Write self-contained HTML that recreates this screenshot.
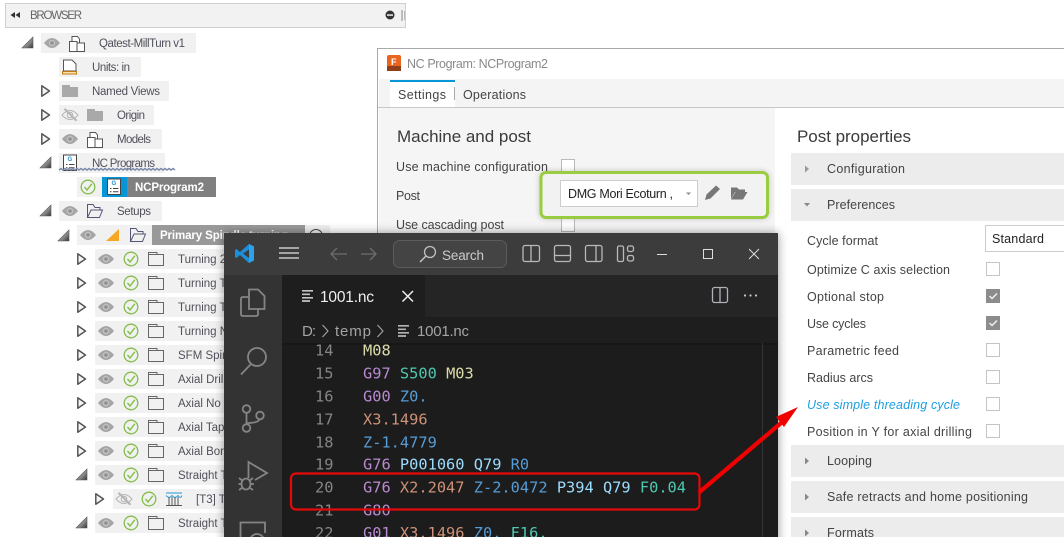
<!DOCTYPE html>
<html><head><meta charset="utf-8"><style>
html,body{margin:0;padding:0;background:#fff;width:1064px;height:537px;overflow:hidden}
svg{display:block}
text{font-family:"Liberation Sans",sans-serif;white-space:pre}
.t{font-size:11.5px;fill:#50505c}
.p{font-size:12.5px;fill:#444}
.h{font-size:17px;fill:#3a3a3a}
.m{font-family:"DejaVu Sans Mono","Liberation Mono",monospace;font-size:15.33px}
.n{fill:#858585}
</style></head><body>
<svg xmlns="http://www.w3.org/2000/svg" width="1064" height="537" viewBox="0 0 1064 537">
<defs>
<linearGradient id="tg" x1="0" y1="0" x2="1" y2="1"><stop offset="0" stop-color="#ddd"/><stop offset=".6" stop-color="#888"/><stop offset="1" stop-color="#333"/></linearGradient>
<g id="eye"><path d="M-8 0Q0-10 8 0Q0 10-8 0Z" fill="#a6a6a6"/><circle r="3" fill="#c9c9c9"/><circle r="1.900" fill="#929292"/></g>
<g id="eyex" fill="none" stroke="#b5b5b5"><path d="M-8 0Q0-9 8 0Q0 9-8 0Z"/><circle r="2.800"/><path d="M-6-6L6 6M-5-6.500L7 5.500"/></g>
<g id="chk" fill="none" stroke="#84bd4a" stroke-width="1.300"><circle r="6.800"/><path d="M-3.500 0L-1 3L3.800-3.200" stroke-width="1.400"/></g>
<path id="fld" d="M.5-6.500H9V-4.500H15.500V6.500H.5ZM.5-4.500H9" fill="none" stroke="#666" stroke-width="1"/>
<path id="fldo" d="M.5 6.500V-6.500H6L8-3.500H13V-1M.5 6.500H12.500L15.500-1H4Z" fill="none" stroke="#557" stroke-width="1"/>
<path id="cl" d="M.8.8L8.500 6L.8 11.200Z" fill="#f4f4f4" stroke="#555" stroke-width="1.500" stroke-linejoin="round"/>
<path id="ex" d="M11 0V11H0Z" fill="url(#tg)" stroke="#555" stroke-width=".6"/>
<g id="part" fill="#fff" stroke="#555" stroke-width="1"><path d="M.5-2.500L3-2.500V-7.500H8.500L10.500-5V-1H15.500V7.500H.5Z"/><path d="M8 -1V7.500M3-2.500H8V-1H10.500"/></g>
<g id="gdoc"><path d="M.5-8H13.500V7.500H.5Z" fill="#fff" stroke="#444"/><text x="4.500" y="-2" font-size="6" font-weight="bold" fill="#1d8fd6">G</text><path d="M3 1.500h1.500M6 1.500h5.500M3 4.800h1.500M6 4.800h5.500" stroke="#444"/></g>
<g id="row"><rect x="95" y="-10" width="135" height="20" fill="#f1f1f1"/></g>
<g id="lines" stroke-width="1.700"><path d="M0 .8H11M0 4.300H8M0 7.800H11M0 11H8"/></g>
<filter id="sh" x="-5%" y="-5%" width="110%" height="110%"><feDropShadow dx="0" dy="0" stdDeviation="5" flood-color="#000" flood-opacity=".4"/></filter>
<filter id="gs" x="-5%" y="-20%" width="110%" height="140%"><feDropShadow dx="0" dy="0" stdDeviation="3" flood-color="#000" flood-opacity=".22"/></filter>
</defs>

<!-- browser header -->
<rect x="5.500" y="3.500" width="400" height="24" fill="#f2f2f2" stroke="#cfcfcf"/>
<path d="M15 12V18L10.500 15ZM20 12V18L15.500 15Z" fill="#333"/>
<text x="30" y="19" font-size="11.500" fill="#666" textLength="52">BROWSER</text>
<circle cx="390" cy="15" r="4.500" fill="#333"/><rect x="387" y="14.300" width="6" height="1.500" fill="#eee"/>
<rect x="401.500" y="10" width="1" height="11" fill="#888"/><rect x="404" y="11" width="1" height="9" fill="#bbb"/>

<!-- tree -->
<rect x="41" y="33" width="155" height="20" fill="#f1f1f1"/>
<use href="#ex" x="22" y="37"/><use href="#eye" x="52" y="43"/><use href="#part" x="69" y="44"/>
<text class="t" x="99" y="47" textLength="86">Qatest-MillTurn v1</text>

<rect x="59" y="57" width="82" height="20" fill="#f1f1f1"/>
<path d="M63.500 60H72L76 64V71H63.500Z" fill="#fff" stroke="#555"/><rect x="62.500" y="71.500" width="14" height="2.500" fill="#fbe3a8" stroke="#c07a10"/>
<text class="t" x="92" y="71" textLength="38">Units: in</text>

<rect x="59" y="81" width="110" height="20" fill="#f1f1f1"/>
<use href="#cl" x="41" y="85"/><path d="M62 85H70V87H78V97H62Z" fill="#a9a9a9"/>
<text class="t" x="92" y="95" textLength="68">Named Views</text>

<rect x="59" y="105" width="95" height="20" fill="#f1f1f1"/>
<use href="#cl" x="41" y="109"/><use href="#eyex" x="70" y="115"/><path d="M87 109H95V111H103V121H87Z" fill="#a9a9a9"/>
<text class="t" x="117" y="119" textLength="28">Origin</text>

<rect x="59" y="129" width="103" height="20" fill="#f1f1f1"/>
<use href="#cl" x="41" y="133"/><use href="#eye" x="70" y="139"/><use href="#part" x="87" y="140"/>
<text class="t" x="117" y="143" textLength="34">Models</text>

<rect x="59" y="153" width="106" height="20" fill="#f1f1f1"/>
<use href="#ex" x="40" y="157"/><use href="#gdoc" x="63" y="163"/>
<text class="t" x="92" y="167" textLength="63">NC Programs</text>
<path d="M59 170l2-1.500 2 1.500 2-1.500 2 1.500 2-1.500 2 1.500 2-1.500 2 1.500 2-1.500 2 1.500 2-1.500 2 1.500 2-1.500 2 1.500 2-1.500 2 1.500 2-1.500 2 1.500 2-1.500 2 1.500 2-1.500 2 1.500 2-1.500 2 1.500 2-1.500 2 1.500 2-1.500 2 1.500 2-1.500 2 1.500 2-1.500 2 1.500 2-1.500 2 1.500 2-1.500 2 1.500 2-1.500 2 1.500 2-1.500 2 1.500 2-1.500 2 1.500 2-1.500 2 1.500 2-1.500 2 1.500 2-1.500 2 1.500 2-1.500 2 1.500 2-1.500 2 1.500 2-1.500 2 1.500 2-1.500 2 1.500 2-1.500 2 1.500" fill="none" stroke="#7d8aa8" stroke-width="1.500"/>

<rect x="77" y="177" width="139" height="20" fill="#f1f1f1"/>
<use href="#chk" x="88" y="187"/><rect x="102" y="177" width="25" height="20" fill="#0696d7"/><use href="#gdoc" x="107" y="187"/>
<rect x="127" y="177" width="89" height="20" fill="#808080"/>
<text x="135" y="191" font-size="11.500" font-weight="bold" fill="#fff" textLength="69">NCProgram2</text>

<rect x="59" y="201" width="103" height="20" fill="#f1f1f1"/>
<use href="#ex" x="40" y="205"/><use href="#eye" x="70" y="211"/><use href="#fldo" x="87" y="211"/>
<text class="t" x="117" y="215" textLength="34">Setups</text>

<rect x="77" y="225" width="253" height="20" fill="#f1f1f1"/>
<use href="#ex" x="58" y="230"/><use href="#eye" x="88" y="235"/><path d="M106 241L119 229V241Z" fill="#f7a823"/><use href="#fldo" x="130" y="235"/>
<rect x="152" y="225" width="153" height="20" fill="#999"/>
<text x="160" y="239" font-size="11.500" font-weight="bold" fill="#fff" textLength="128">Primary Spindle turning</text>
<circle cx="316" cy="236" r="6.500" fill="none" stroke="#444"/>

<g>
<use href="#row" y="259"/><use href="#cl" x="77" y="253"/><use href="#eye" x="106" y="259"/><use href="#chk" x="131" y="259"/><use href="#fld" x="148" y="259"/><text class="t" x="178" y="263">Turning 2D</text>
<use href="#row" y="283"/><use href="#cl" x="77" y="277"/><use href="#eye" x="106" y="283"/><use href="#chk" x="131" y="283"/><use href="#fld" x="148" y="283"/><text class="t" x="178" y="287">Turning Thread</text>
<use href="#row" y="307"/><use href="#cl" x="77" y="301"/><use href="#eye" x="106" y="307"/><use href="#chk" x="131" y="307"/><use href="#fld" x="148" y="307"/><text class="t" x="178" y="311">Turning Taper</text>
<use href="#row" y="331"/><use href="#cl" x="77" y="325"/><use href="#eye" x="106" y="331"/><use href="#chk" x="131" y="331"/><use href="#fld" x="148" y="331"/><text class="t" x="178" y="335">Turning Nose</text>
<use href="#row" y="355"/><use href="#cl" x="77" y="349"/><use href="#eye" x="106" y="355"/><use href="#chk" x="131" y="355"/><use href="#fld" x="148" y="355"/><text class="t" x="178" y="359">SFM Spindle</text>
<use href="#row" y="379"/><use href="#cl" x="77" y="373"/><use href="#eye" x="106" y="379"/><use href="#chk" x="131" y="379"/><use href="#fld" x="148" y="379"/><text class="t" x="178" y="383">Axial Drilling</text>
<use href="#row" y="403"/><use href="#cl" x="77" y="397"/><use href="#eye" x="106" y="403"/><use href="#chk" x="131" y="403"/><use href="#fld" x="148" y="403"/><text class="t" x="178" y="407">Axial No Tool</text>
<use href="#row" y="427"/><use href="#cl" x="77" y="421"/><use href="#eye" x="106" y="427"/><use href="#chk" x="131" y="427"/><use href="#fld" x="148" y="427"/><text class="t" x="178" y="431">Axial Tap Tool</text>
<use href="#row" y="451"/><use href="#cl" x="77" y="445"/><use href="#eye" x="106" y="451"/><use href="#chk" x="131" y="451"/><use href="#fld" x="148" y="451"/><text class="t" x="178" y="455">Axial Boring</text>
<use href="#row" y="475"/><use href="#ex" x="76" y="469"/><use href="#eye" x="106" y="475"/><use href="#chk" x="131" y="475"/><use href="#fld" x="148" y="475"/><text class="t" x="178" y="479">Straight Tool</text>
<rect x="113" y="489" width="117" height="20" fill="#f1f1f1"/><use href="#cl" x="95" y="493"/><use href="#eyex" x="124" y="499"/><use href="#chk" x="149" y="499"/>
<path d="M166 493H182M166 495.500C168 498 170 498 172 495.500C174 498 176 498 178 495.500C180 498 181 498 182 495.500" fill="none" stroke="#1f9ad6"/><path d="M169 497V505M172 497V505M175 497V505M178 497V505M166 505.500H182" stroke="#555"/>
<text class="t" x="196" y="503">[T3] Tool</text>
<use href="#row" y="523"/><use href="#ex" x="76" y="517"/><use href="#eye" x="106" y="523"/><use href="#chk" x="131" y="523"/><use href="#fld" x="148" y="523"/><text class="t" x="178" y="527">Straight Tool</text>
</g>

<!-- dialog -->
<rect x="377" y="48" width="687" height="489" fill="#a9a9a9"/>
<rect x="378" y="49" width="686" height="488" fill="#fff"/>
<rect x="379" y="79" width="685" height="28" fill="#f4f4f4"/>
<rect x="378" y="107" width="686" height="1" fill="#c8c8c8"/>
<rect x="379" y="108" width="396" height="429" fill="#f5f5f5"/>
<rect x="387" y="55" width="14" height="16" rx="2" fill="#e8641f"/><rect x="387" y="66" width="14" height="5" fill="#8f3f1a"/>
<text x="391" y="65" font-size="9" font-weight="bold" fill="#fff">F</text>
<text x="407" y="68" font-size="12.500" fill="#8a8a8a" textLength="141">NC Program: NCProgram2</text>
<rect x="390" y="80" width="65" height="27" fill="#fff"/><rect x="390" y="80" width="65" height="2" fill="#0696d7"/>
<rect x="454" y="87" width="1" height="13" fill="#aaa"/>
<text class="p" x="398" y="99" textLength="48">Settings</text>
<text class="p" x="463" y="99" textLength="63">Operations</text>

<text class="h" x="397" y="142" textLength="134">Machine and post</text>
<text class="p" x="396" y="171" textLength="152">Use machine configuration</text>
<rect x="561.500" y="159.500" width="13" height="13" fill="#fff" stroke="#bbb"/>
<text class="p" x="396" y="200" textLength="24">Post</text>
<text class="p" x="396" y="229" textLength="108">Use cascading post</text>
<rect x="561.500" y="218.500" width="13" height="13" fill="#fff" stroke="#bbb"/>

<rect x="541" y="172.500" width="226.500" height="45" rx="5" fill="#f2f2f2" stroke="#99cc3f" stroke-width="3" filter="url(#gs)"/>
<rect x="560.500" y="180.500" width="137" height="26" fill="#fff" stroke="#ccc"/>
<text class="p" x="568" y="198" textLength="105" style="fill:#222">DMG Mori Ecoturn ,</text>
<path d="M686 192.500H691L688.500 195Z" fill="#888"/>
<path d="M705 200L706.500 194.500L716 185.500L720 189L710.500 198.500Z" fill="#777"/>
<path d="M731 199V187.500H737L739 189.500H745V192H735L731 199ZM731 199.500H743L747.500 192H735.500Z" fill="#777"/>

<!-- post properties -->
<text class="h" x="797" y="142" textLength="114">Post properties</text>
<rect x="791" y="153" width="273" height="32" fill="#ececec"/>
<rect x="791" y="189" width="273" height="32" fill="#ececec"/>
<rect x="791" y="445" width="273" height="32" fill="#ececec"/>
<rect x="791" y="481" width="273" height="32" fill="#ececec"/>
<rect x="791" y="517" width="273" height="20" fill="#ececec"/>
<path d="M805 165.500L809 169L805 172.500Z" fill="#999"/>
<path d="M804 203H810L807 206.500Z" fill="#888"/>
<path d="M805 457.500L809 461L805 464.500Z" fill="#888"/>
<path d="M805 493.500L809 497L805 500.500Z" fill="#888"/>
<path d="M805 529.500L809 533L805 536.500Z" fill="#888"/>
<text class="p" x="827" y="173" textLength="78">Configuration</text>
<text class="p" x="827" y="209" textLength="68">Preferences</text>
<text class="p" x="827" y="465" textLength="45">Looping</text>
<text class="p" x="827" y="501" textLength="201">Safe retracts and home positioning</text>
<text class="p" x="827" y="537" textLength="47">Formats</text>

<text class="p" x="807" y="245" textLength="71">Cycle format</text>
<rect x="985.500" y="225.500" width="90" height="26" fill="#fff" stroke="#ccc"/>
<text class="p" x="992" y="243" textLength="52" style="fill:#222">Standard</text>
<text class="p" x="807" y="274" textLength="143">Optimize C axis selection</text>
<text class="p" x="807" y="301" textLength="77">Optional stop</text>
<text class="p" x="807" y="328" textLength="59">Use cycles</text>
<text class="p" x="807" y="355" textLength="92">Parametric feed</text>
<text class="p" x="807" y="382" textLength="66">Radius arcs</text>
<text class="p" x="807" y="409" textLength="153" font-style="italic" style="fill:#1c9fe0">Use simple threading cycle</text>
<text class="p" x="807" y="436" textLength="165">Position in Y for axial drilling</text>
<rect x="986.500" y="262.500" width="13" height="13" fill="#fff" stroke="#c4c4c4"/>
<rect x="986" y="289" width="14" height="14" fill="#8c8c8c"/><path d="M989.500 296L992 298.500L997 293.500" fill="none" stroke="#eee" stroke-width="1.500"/>
<rect x="986" y="316" width="14" height="14" fill="#8c8c8c"/><path d="M989.500 323L992 325.500L997 320.500" fill="none" stroke="#eee" stroke-width="1.500"/>
<rect x="986.500" y="343.500" width="13" height="13" fill="#fff" stroke="#c4c4c4"/>
<rect x="986.500" y="370.500" width="13" height="13" fill="#fff" stroke="#c4c4c4"/>
<rect x="986.500" y="397.500" width="13" height="13" fill="#fff" stroke="#c4c4c4"/>
<rect x="986.500" y="424.500" width="13" height="13" fill="#fff" stroke="#c4c4c4"/>

<!-- VS Code -->
<rect x="224" y="233" width="554" height="320" fill="#1e1e1e" filter="url(#sh)"/>
<rect x="224" y="233" width="554" height="42" fill="#3c3c3c"/>
<rect x="224" y="275" width="58" height="262" fill="#333"/>
<rect x="282" y="275" width="496" height="42" fill="#252526"/>
<rect x="282" y="275" width="143" height="42" fill="#1e1e1e"/>
<rect x="282" y="317" width="496" height="26" fill="#1e1e1e"/>
<rect x="282" y="343" width="496" height="2" fill="#171717"/>
<rect x="762" y="343" width="1" height="194" fill="#333"/>

<!-- logo -->
<path d="M249 244L254 246.500V260.500L249 263L240 255L236.500 258L235 257V250L236.500 249L240 252Z" fill="#1c8fd9"/>
<path d="M249 249.500L243 253.500L249 258Z" fill="#3c3c3c"/><path d="M249 244L254 246.500V260.500L249 263Z" fill="#2aa3ec"/>
<path d="M279 248H299M279 253H299M279 258H299" stroke="#c8c8c8" stroke-width="1.400"/>
<path d="M347 254H331M337 248L331 254L337 260M361 254H376M370 248L376 254L370 260" fill="none" stroke="#6d6d6d" stroke-width="1.300"/>
<rect x="393.500" y="240.500" width="113" height="27" rx="6" fill="#444" stroke="#5c5c5c"/>
<circle cx="430" cy="252" r="5.500" fill="none" stroke="#c0c0c0" stroke-width="1.300"/><path d="M426 256L420 262" stroke="#c0c0c0" stroke-width="1.500"/>
<text x="442" y="260" font-size="13.500" fill="#ccc" textLength="42">Search</text>

<g fill="none" stroke="#b9b9b9" stroke-width="1.300">
<rect x="523" y="245.500" width="16.500" height="16" rx="2"/><path d="M531 245.500V261.500"/>
<rect x="554.500" y="245.500" width="16" height="16" rx="2"/><path d="M554.500 255.500H570.500"/>
<rect x="585.500" y="245.500" width="16.500" height="16" rx="2"/><path d="M596 245.500V261.500"/>
<rect x="617.500" y="246" width="6" height="15.500" rx="1.500"/><rect x="627.500" y="246" width="6" height="5.500" rx="1.800"/><rect x="627.500" y="255.500" width="6" height="5.500" rx="1.800"/>
</g>
<path d="M657 254.500H667" stroke="#ddd"/>
<rect x="703.500" y="249.500" width="9" height="9" fill="none" stroke="#ddd"/>
<path d="M749 249L759 259M759 249L749 259" stroke="#ddd"/>

<!-- activity icons -->
<g fill="none" stroke="#858585" stroke-width="1.800">
<path d="M249 297H243Q241 297 241 299V314Q241 316 243 316H256Q258 316 258 314V309"/><path d="M249 289.500H258L264.500 296V309H249Z"/>
<circle cx="257" cy="357" r="9"/><path d="M251 364L241 374.500"/>
<circle cx="246.500" cy="409" r="3.800"/><circle cx="246.500" cy="428" r="3.800"/><circle cx="260" cy="415.500" r="3.800"/><path d="M246.500 413V424M246.500 423Q258 423 259.500 419.500"/>
<path d="M248.500 478L248.500 462L267 473L255 480"/><ellipse cx="246" cy="484" rx="4.500" ry="5.500"/><path d="M239 478L243 481M253 478L249 481M238.500 484H241M251 484H254M239 490L242 488M253 490L250 488"/>
<path d="M240.500 537V522.500H265V533"/><circle cx="257" cy="541" r="7"/>
</g>

<!-- tab -->
<g stroke="#c5c5c5"><use href="#lines" x="302" y="290"/></g>
<text x="320" y="302" font-size="15.500" fill="#eee" textLength="54">1001.nc</text>
<path d="M402.500 291L413 301.500M413 291L402.500 301.500" stroke="#eee" stroke-width="1.500"/>
<rect x="712.500" y="287.500" width="15" height="15" rx="2" fill="none" stroke="#b0b0b8" stroke-width="1.300"/><path d="M720 287.500V302.500" stroke="#b0b0b8" stroke-width="1.300"/>
<circle cx="745" cy="295.500" r="1.100" fill="#c0c8d0"/><circle cx="750.500" cy="295.500" r="1.100" fill="#c0c8d0"/><circle cx="756" cy="295.500" r="1.100" fill="#c0c8d0"/>

<!-- breadcrumb -->
<text x="302" y="336" font-size="15" fill="#a4a4a4" textLength="14">D:</text>
<path d="M322.500 325L328 331L322.500 337M377.500 325L383 331L377.500 337" fill="none" stroke="#a4a4a4" stroke-width="1.100"/>
<text x="335" y="336" font-size="15" fill="#a4a4a4" textLength="36">temp</text>
<g stroke="#b5b5b5"><use href="#lines" x="398" y="325"/></g>
<text x="417" y="336" font-size="15" fill="#a4a4a4" textLength="52">1001.nc</text>

<!-- code -->
<g class="m">
<text class="m n" x="315" y="355.500">14</text>
<text class="m n" x="315" y="378.500">15</text>
<text class="m n" x="315" y="401.500">16</text>
<text class="m n" x="315" y="424.500">17</text>
<text class="m n" x="315" y="447.500">18</text>
<text class="m n" x="315" y="469.500">19</text>
<text class="m n" x="315" y="492.500">20</text>
<text class="m n" x="315" y="515.500">21</text>
<text class="m n" x="315" y="538">22</text>
<text class="m" x="363" y="355.500" fill="#dcdcaa">M08</text>
<text class="m" x="363" y="378.500" fill="#b98ad0">G97<tspan fill="#4ec9b0" dx="9.230">S500</tspan><tspan fill="#dcdcaa" dx="9.230">M03</tspan></text>
<text class="m" x="363" y="401.500" fill="#b98ad0">G00<tspan fill="#569cd6" dx="9.230">Z0.</tspan></text>
<text class="m" x="363" y="424.500" fill="#ce9178">X3.1496</text>
<text class="m" x="363" y="447.500" fill="#569cd6">Z-1.4779</text>
<text class="m" x="363" y="469.500" fill="#b98ad0">G76<tspan fill="#9cdcfe" dx="9.230">P001060</tspan><tspan fill="#9cdcfe" dx="9.230">Q79</tspan><tspan fill="#569cd6" dx="9.230">R0</tspan></text>
<text class="m" x="363" y="492.500" fill="#b98ad0">G76<tspan fill="#ce9178" dx="9.230">X2.2047</tspan><tspan fill="#569cd6" dx="9.230">Z-2.0472</tspan><tspan fill="#9cdcfe" dx="9.230">P394</tspan><tspan fill="#9cdcfe" dx="9.230">Q79</tspan><tspan fill="#4ec9b0" dx="9.230">F0.04</tspan></text>
<text class="m" x="363" y="515.500" fill="#b98ad0">G80</text>
<text class="m" x="363" y="538" fill="#b98ad0">G01<tspan fill="#ce9178" dx="9.230">X3.1496</tspan><tspan fill="#569cd6" dx="9.230">Z0.</tspan><tspan fill="#4ec9b0" dx="9.230">F16.</tspan></text>
</g>

<!-- annotations -->
<rect x="291" y="473.500" width="408.500" height="36" rx="5" fill="none" stroke="#e60808" stroke-width="2.200"/>
<path d="M699 492.500L781 423" stroke="#f00000" stroke-width="4.200"/>
<path d="M798 407L776 417L784 427Z" fill="#f00000"/>
</svg>
</body></html>
